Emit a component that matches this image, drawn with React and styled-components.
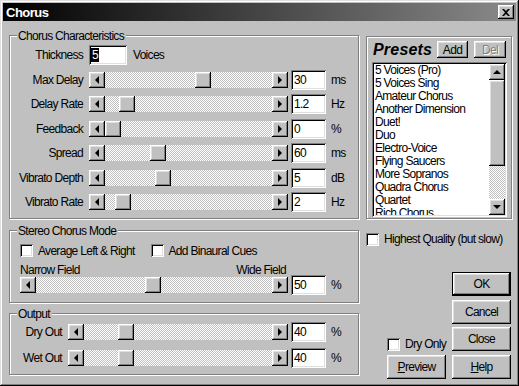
import React from 'react';
import styled, { createGlobalStyle, css } from 'styled-components';

const GlobalStyle = createGlobalStyle`
  html, body { margin: 0; padding: 0; background: #c0c0c0; }
  body {
    font-family: "Liberation Sans", Arial, sans-serif;
    font-size: 12px;
    letter-spacing: -0.7px;
    color: #000;
  }
  * { box-sizing: border-box; }
`;

const raised = css`
  box-shadow: inset -1px -1px #000, inset 1px 1px #fff, inset -2px -2px #808080, inset 2px 2px #dfdfdf;
`;
const sunken = css`
  box-shadow: inset 1px 1px #808080, inset -1px -1px #fff, inset 2px 2px #000, inset -2px -2px #dfdfdf;
`;
const checker = css`
  background: repeating-conic-gradient(#c0c0c0 0 25%, #fff 0 50%) 0 0 / 2px 2px;
`;

const Frame = styled.div`
  width: 519px;
  height: 386px;
  padding: 3px;
  background: #c0c0c0;
  box-shadow: inset -1px -1px #000, inset 1px 1px #dfdfdf, inset -2px -2px #808080, inset 2px 2px #fff;
  display: flex;
  flex-direction: column;
`;

const TitleBar = styled.div`
  height: 18px;
  flex: none;
  display: flex;
  align-items: center;
  justify-content: space-between;
  padding: 0 2px 0 3px;
  background: linear-gradient(90deg, #000 0%, #8a8a8a 100%);
  color: #fff;
  font-weight: bold;
  font-size: 13px;
  letter-spacing: -0.5px;
`;

const CloseBox = styled.div`
  width: 16px;
  height: 14px;
  background: #c0c0c0;
  ${raised};
  display: flex;
  align-items: center;
  justify-content: center;
`;

const Body = styled.div`
  display: grid;
  grid-template-columns: 350px 146px;
  column-gap: 7px;
  padding: 0 4px 0 6px;
  align-items: start;
`;

const Column = styled.div`
  display: flex;
  flex-direction: column;
  padding-top: ${p => p.$top}px;
`;

const Group = styled.div`
  height: ${p => p.$h}px;
  margin-top: ${p => p.$mt || 0}px;
  border: 1px solid #808080;
  box-shadow: inset 1px 1px #fff, 1px 1px #fff;
`;

const Legend = styled.span`
  display: table;
  margin: -7px 0 0 7px;
  padding: 0 2px 0 1px;
  line-height: 14px;
  background: #c0c0c0;
`;

const Rows = styled.div`
  display: grid;
  grid-auto-rows: 24.5px;
`;

const Row = styled.div`
  display: flex;
  align-items: center;
  height: ${p => (p.$h ? `${p.$h}px` : 'auto')};
  margin-top: ${p => p.$mt || 0}px;
  padding-left: ${p => p.$pl || 0}px;
`;

const Label = styled.span`
  width: ${p => p.$w}px;
  flex: none;
  text-align: right;
  margin-right: 6px;
  white-space: nowrap;
`;

const Field = styled.div`
  width: ${p => p.$w || 35}px;
  height: 20px;
  flex: none;
  margin-left: ${p => p.$ml ?? 3}px;
  background: #fff;
  ${sunken};
  padding: 0 3px;
  line-height: 20px;
  white-space: nowrap;
`;

const Selected = styled.span`
  background: #000;
  color: #fff;
  padding: 0 1px;
  margin-left: -1px;
`;

const Unit = styled.span`
  margin-left: ${p => p.$ml || 5}px;
`;

const HScroll = styled.div`
  display: flex;
  flex: none;
  width: ${p => p.$w}px;
  height: 16px;
`;

const ArrowBtn = styled.div`
  width: 16px;
  height: 16px;
  flex: none;
  background: #c0c0c0;
  ${raised};
  display: flex;
  align-items: center;
  justify-content: center;
`;

const Track = styled.div`
  flex: 1;
  display: flex;
  flex-direction: ${p => (p.$vertical ? 'column' : 'row')};
  ${checker};
`;

const Thumb = styled.div`
  flex: none;
  width: 16px;
  height: ${p => p.$h || 16}px;
  background: #c0c0c0;
  ${raised};
`;

const Box = styled.span`
  width: 13px;
  height: 13px;
  flex: none;
  background: #fff;
  ${sunken};
  margin-right: 5px;
`;

const Check = styled.label`
  display: flex;
  align-items: center;
  margin-left: ${p => p.$ml || 0}px;
  margin-top: ${p => p.$mt || 0}px;
  white-space: nowrap;
`;

const FieldEnds = styled.div`
  display: flex;
  justify-content: space-between;
  width: 266px;
  margin: 6px 0 0 10px;
  line-height: 14px;
`;

const PresetsBox = styled.div`
  height: 183px;
  border: 1px solid #808080;
  box-shadow: inset 1px 1px #fff, 1px 1px #fff;
  padding: 4px 5px 0 5px;
`;

const PresetsHead = styled.div`
  display: flex;
  align-items: center;
  height: 17px;
  padding-left: 1px;
`;

const PresetsTitle = styled.span`
  font-weight: 900;
  font-style: italic;
  font-size: 16px;
  letter-spacing: 0.2px;
  margin-right: auto;
`;

const Button = styled.div`
  width: ${p => p.$w || 59}px;
  height: ${p => p.$h || 24}px;
  margin-left: ${p => p.$ml || 0}px;
  background: #c0c0c0;
  display: flex;
  align-items: center;
  justify-content: center;
  ${raised};
  ${p =>
    p.$default &&
    css`
      box-shadow: inset 0 0 0 1px #000, inset -2px -2px #000, inset 2px 2px #fff, inset -3px -3px #808080,
        inset 3px 3px #dfdfdf;
    `}
  ${p =>
    p.$disabled &&
    css`
      color: #808080;
      text-shadow: 1px 1px #fff;
    `}
`;

const ListBox = styled.div`
  margin-top: 4px;
  height: 155px;
  width: 135px;
  background: #fff;
  padding: 2px;
  ${sunken};
  display: flex;
`;

const Items = styled.div`
  flex: 1;
  overflow: hidden;
  padding-left: 1px;
  line-height: 13px;
  white-space: nowrap;
`;

const VScroll = styled.div`
  width: 16px;
  flex: none;
  display: flex;
  flex-direction: column;
`;

const Actions = styled.div`
  display: grid;
  grid-template-columns: 59px 59px;
  grid-template-rows: repeat(4, 24px);
  column-gap: 6px;
  row-gap: 3.5px;
  margin: 26px 0 0 21px;
`;

const DryOnly = styled(Check)`
  grid-column: 1;
  grid-row: 3;
  align-self: end;
  margin-bottom: 0;
`;

const Tri = ({ dir }) => {
  const pts = {
    left: '5,0 1,4 5,8',
    right: '1,0 5,4 1,8',
    up: '0,5 4,1 8,5',
    down: '0,1 4,5 8,1',
  }[dir];
  const vertical = dir === 'up' || dir === 'down';
  return (
    <svg width={vertical ? 8 : 6} height={vertical ? 6 : 8} viewBox={vertical ? '0 0 8 6' : '0 0 6 8'}>
      <polygon points={pts} fill="#000" />
    </svg>
  );
};

const Slider = ({ width, pos }) => (
  <HScroll $w={width}>
    <ArrowBtn><Tri dir="left" /></ArrowBtn>
    <Track>
      <Thumb style={{ marginLeft: pos }} />
    </Track>
    <ArrowBtn><Tri dir="right" /></ArrowBtn>
  </HScroll>
);

const chorusRows = [
  { label: 'Max Delay', pos: 90, value: '30', unit: 'ms' },
  { label: 'Delay Rate', pos: 14, value: '1.2', unit: 'Hz' },
  { label: 'Feedback', pos: 0, value: '0', unit: '%' },
  { label: 'Spread', pos: 45, value: '60', unit: 'ms' },
  { label: 'Vibrato Depth', pos: 50, value: '5', unit: 'dB' },
  { label: 'Vibrato Rate', pos: 10, value: '2', unit: 'Hz' },
];

const presets = [
  '5 Voices (Pro)',
  '5 Voices Sing',
  'Amateur Chorus',
  'Another Dimension',
  'Duet!',
  'Duo',
  'Electro-Voice',
  'Flying Saucers',
  'More Sopranos',
  'Quadra Chorus',
  'Quartet',
  'Rich Chorus',
];

export default function App() {
  return (
    <>
      <GlobalStyle />
      <Frame>
        <TitleBar>
          <span>Chorus</span>
          <CloseBox>
            <svg width="8" height="7" viewBox="0 0 8 7">
              <path d="M0 0h2l2 2 2-2h2L5 3.5 8 7H6L4 5 2 7H0l3-3.5z" fill="#000" />
            </svg>
          </CloseBox>
        </TitleBar>

        <Body>
          <Column $top={14}>
            <Group $h={184}>
              <Legend>Chorus Characteristics</Legend>
              <Rows>
                <Row>
                  <Label $w={73}>Thickness</Label>
                  <Field $w={38} $ml={0}><Selected>5</Selected></Field>
                  <Unit $ml={6}>Voices</Unit>
                </Row>
                {chorusRows.map(r => (
                  <Row key={r.label}>
                    <Label $w={73}>{r.label}</Label>
                    <Slider width={199} pos={r.pos} />
                    <Field>{r.value}</Field>
                    <Unit>{r.unit}</Unit>
                  </Row>
                ))}
              </Rows>
            </Group>

            <Group $h={73} $mt={11}>
              <Legend>Stereo Chorus Mode</Legend>
              <Row $mt={6} $pl={10} $h={13}>
                <Check><Box />Average Left &amp; Right</Check>
                <Check $ml={16}><Box />Add Binaural Cues</Check>
              </Row>
              <FieldEnds>
                <span>Narrow Field</span>
                <span>Wide Field</span>
              </FieldEnds>
              <Row $pl={10} $h={16}>
                <Slider width={268} pos={109} />
                <Field>50</Field>
                <Unit>%</Unit>
              </Row>
            </Group>

            <Group $h={62} $mt={10}>
              <Legend>Output</Legend>
              <Row $mt={3} $h={16}>
                <Label $w={52}>Dry Out</Label>
                <Slider width={220} pos={34} />
                <Field>40</Field>
                <Unit>%</Unit>
              </Row>
              <Row $mt={10} $h={16}>
                <Label $w={52}>Wet Out</Label>
                <Slider width={220} pos={34} />
                <Field>40</Field>
                <Unit>%</Unit>
              </Row>
            </Group>
          </Column>

          <Column $top={15}>
            <PresetsBox>
              <PresetsHead>
                <PresetsTitle>Presets</PresetsTitle>
                <Button $w={31} $h={17}>Add</Button>
                <Button $w={32} $h={17} $ml={6} $disabled>Del</Button>
              </PresetsHead>
              <ListBox>
                <Items>
                  {presets.map(p => (
                    <div key={p}>{p}</div>
                  ))}
                </Items>
                <VScroll>
                  <ArrowBtn><Tri dir="up" /></ArrowBtn>
                  <Track $vertical>
                    <Thumb $h={86} />
                  </Track>
                  <ArrowBtn><Tri dir="down" /></ArrowBtn>
                </VScroll>
              </ListBox>
            </PresetsBox>

            <Check $mt={13}>
              <Box />Highest Quality (but slow)
            </Check>

            <Actions>
              <Button $default style={{ gridColumn: 2, gridRow: 1 }}>OK</Button>
              <Button style={{ gridColumn: 2, gridRow: 2 }}>Cancel</Button>
              <Button style={{ gridColumn: 2, gridRow: 3 }}>Close</Button>
              <Button style={{ gridColumn: 2, gridRow: 4 }}><u>H</u>elp</Button>
              <DryOnly><Box />Dry Only</DryOnly>
              <Button style={{ gridColumn: 1, gridRow: 4 }}><u>P</u>review</Button>
            </Actions>
          </Column>
        </Body>
      </Frame>
    </>
  );
}
